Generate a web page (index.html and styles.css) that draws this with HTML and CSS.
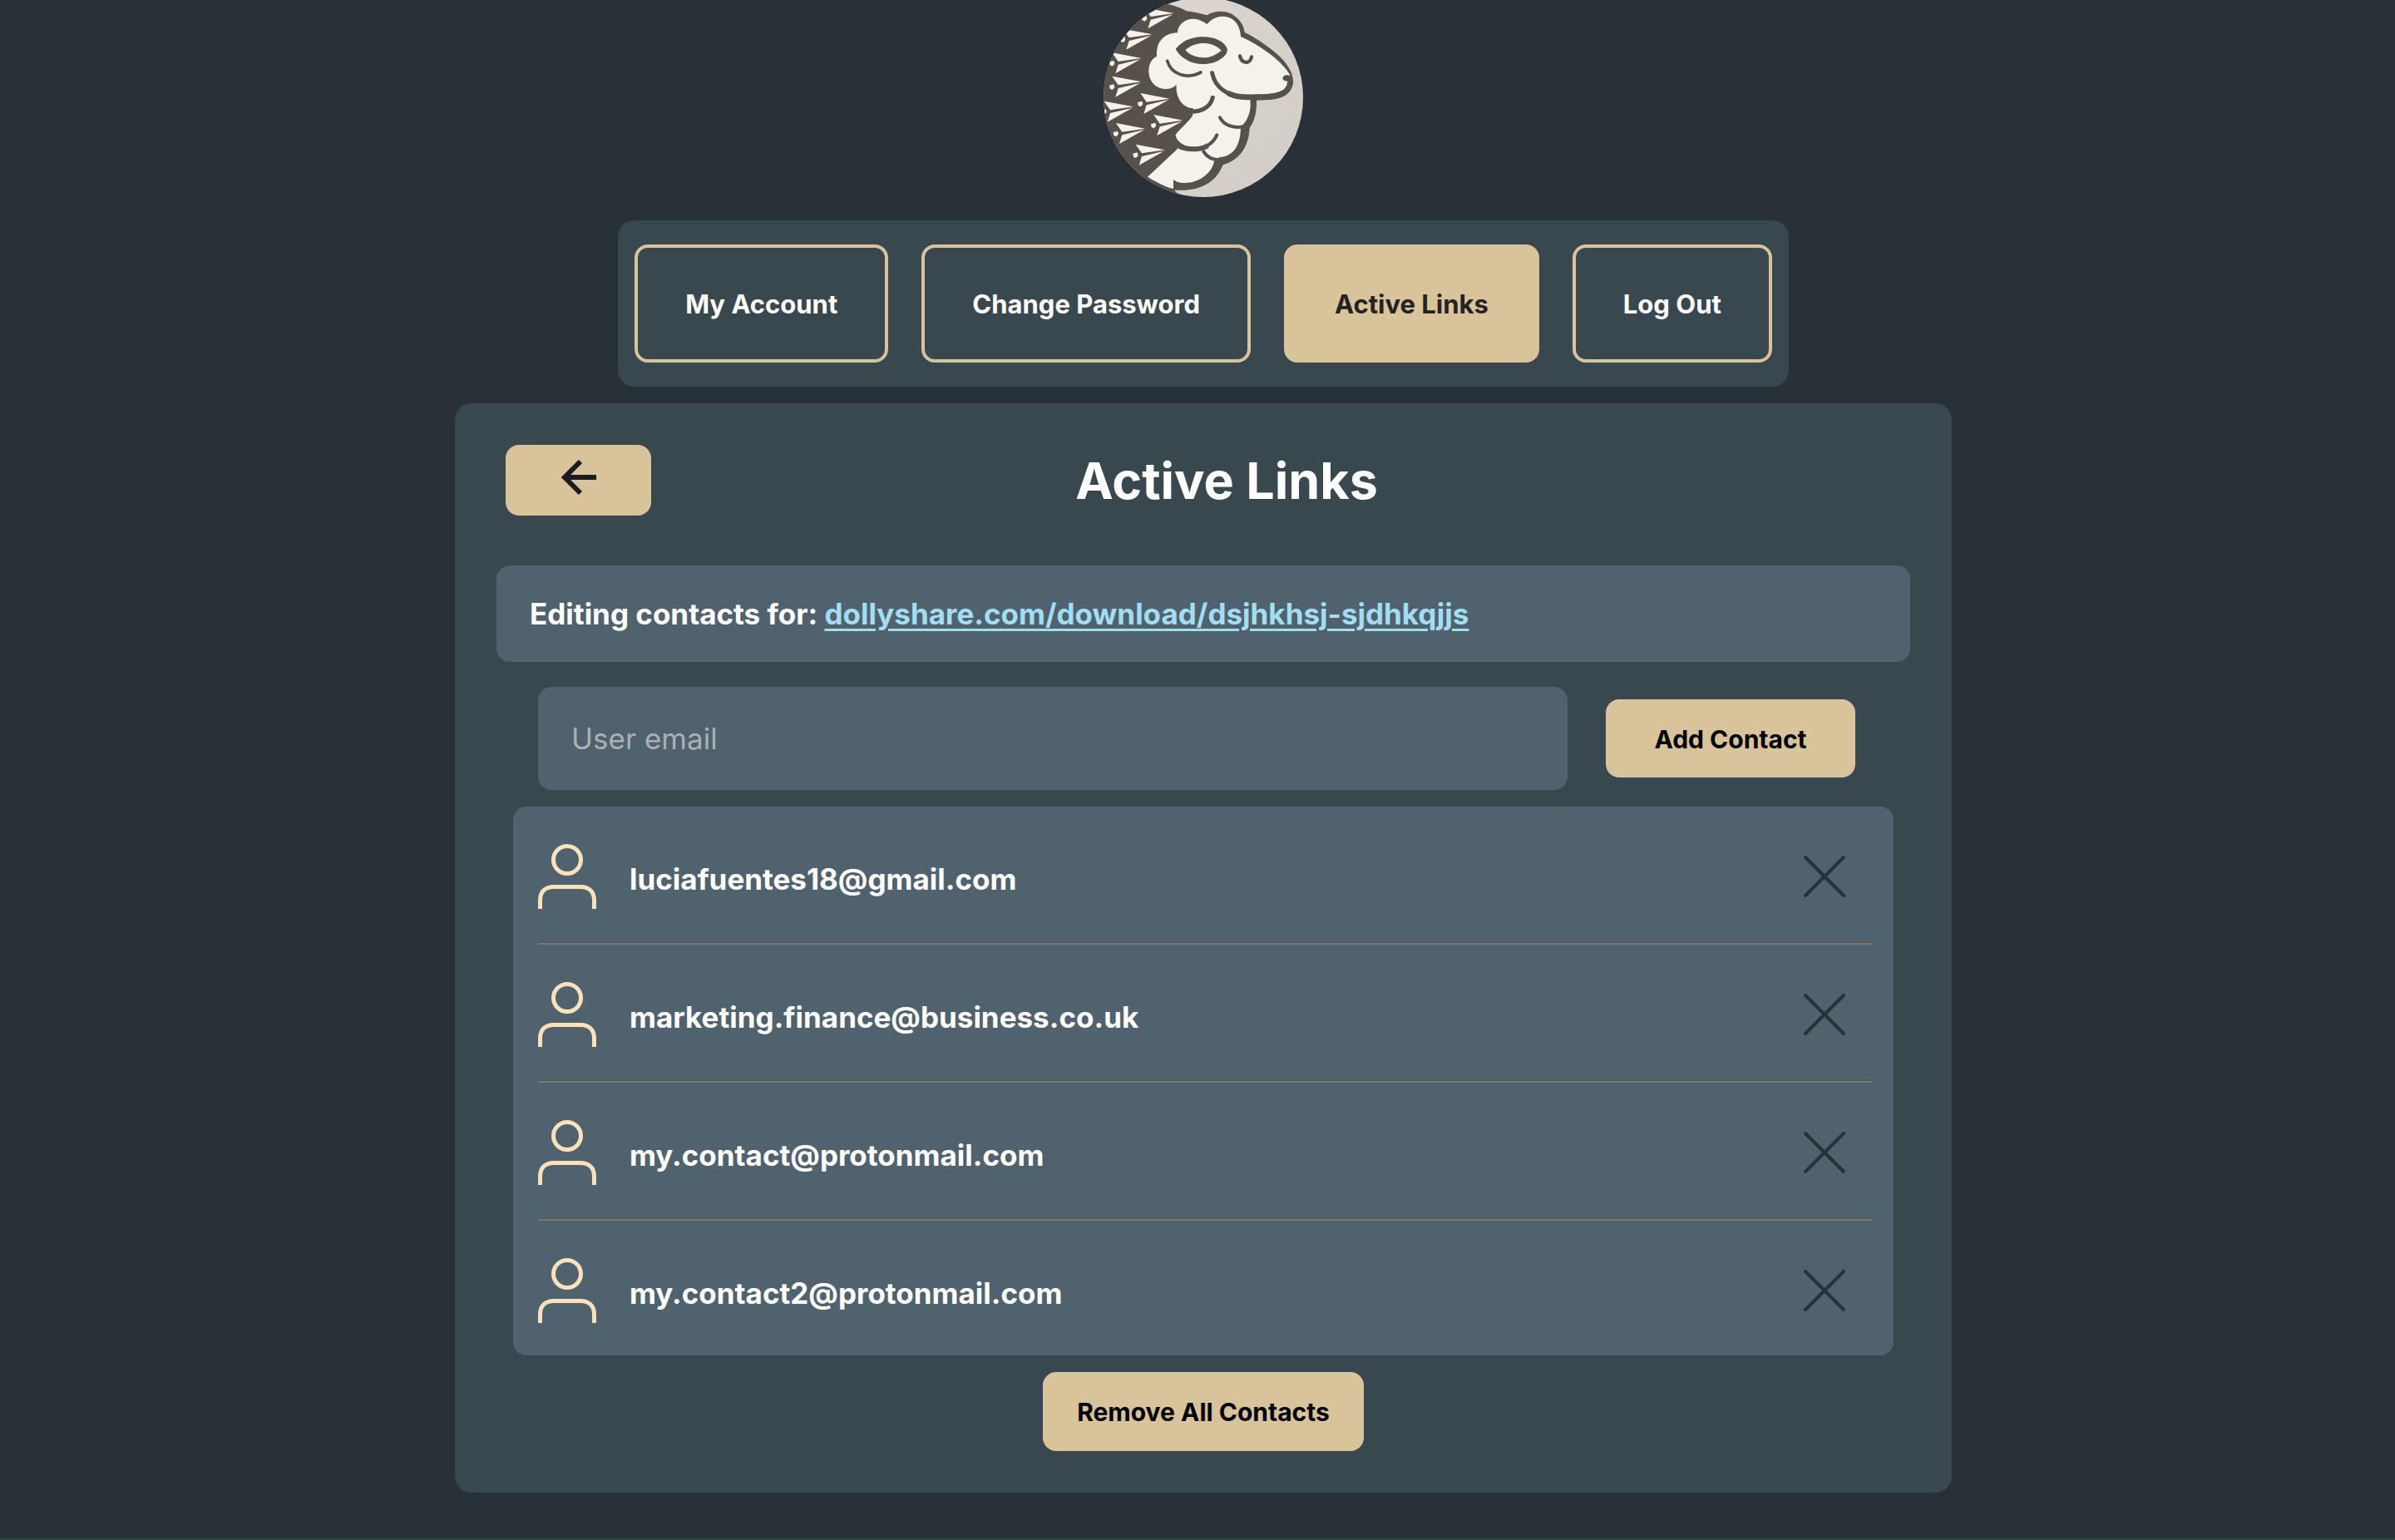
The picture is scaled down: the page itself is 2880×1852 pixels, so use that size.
FILE: index.html
```html
<!DOCTYPE html>
<html lang="en">
<head>
<meta charset="utf-8">
<meta name="viewport" content="width=device-width, initial-scale=1">
<title>Active Links</title>
<link rel="stylesheet" href="styles.css">
</head>
<body>
<svg class="sprites" aria-hidden="true">
  <symbol id="user" viewBox="0 0 70 78">
    <circle cx="35" cy="19" r="16.5"/>
    <path d="M2.5 78V68C2.5 57 9 51.5 19 51.5H51C61 51.5 67.5 57 67.5 68V78"/>
  </symbol>
  <symbol id="cross" viewBox="0 0 50 50">
    <path d="M2 2 48 48M48 2 2 48"/>
  </symbol>
</svg>

<header class="top">
  <svg class="logo" viewBox="51 -9 720 720" role="img" aria-label="Dollyshare">
    <defs>
      <clipPath id="disc"><circle cx="411" cy="351" r="360"/></clipPath>
      <linearGradient id="paper" x1="0" y1="0" x2="1" y2="1">
        <stop offset="0" stop-color="#dcd8d1"/>
        <stop offset="1" stop-color="#d1ccc4"/>
      </linearGradient>
      <g id="plane">
        <path d="M0 0-106-20-84 12ZM-4 4-84 23-94 55Z"/>
        <path d="M-116 13-100 9-97 20-105 29-114 25Z"/>
      </g>
    </defs>
    <g clip-path="url(#disc)">
      <rect x="51" y="-9" width="720" height="720" fill="url(#paper)"/>
      <path fill="#58514b" d="M0-20 230 8 262 12C300 16 330 28 350 40 378 43 400 48 424 55 450 38 492 36 520 55 545 72 558 95 560 117 600 135 665 180 698 215 722 245 735 265 735 295 733 335 700 357 650 360L603 362C604 400 598 432 578 462 575 525 545 577 482 595 462 645 420 682 345 686L305 686 340 715H0Z"/>
      <path fill="#f5f1eb" d="M424 88C442 66 465 56 492 60 525 65 545 95 546 132 610 160 690 215 722 268L722 300C715 322 690 335 640 340L580 345V362C585 400 572 435 546 458 545 520 525 562 470 567L450 583C440 630 390 662 340 660 325 660 312 656 303 648L303 680 290 678C255 665 230 650 210 638L318 537 310 488C330 460 350 450 372 418L375 391C335 390 310 350 314 305 290 335 214 325 214 255 214 230 225 212 243 203 240 155 265 120 318 118 318 90 345 65 385 69 400 72 415 80 424 88Z"/>
      <path fill="#58514b" d="M311 177C340 140 380 133 412 133 450 133 485 148 497 175 500 190 490 204 470 215 440 236 380 236 350 215 330 205 320 192 311 177Z"/>
      <path fill="#f5f1eb" d="M346 180C370 160 395 155 415 156 440 157 460 166 476 182 455 200 430 209 410 208 385 206 360 198 346 180Z"/>
      <g fill="none" stroke="#58514b" stroke-linecap="round">
        <path stroke-width="11" d="M281 220C295 268 350 288 402 261"/>
        <path stroke-width="13" d="M543 202C550 232 580 232 585 205"/>
        <path stroke-width="15" d="M443 263C452 315 500 349 560 351"/>
        <path stroke-width="20" d="M505 338C530 350 560 352 600 350 670 350 722 345 725 292"/>
        <path stroke-width="15" d="M445 352C435 390 400 405 362 402"/>
        <path stroke-width="12" d="M471 424C485 452 520 463 556 457"/>
        <path stroke-width="12" d="M306 494C325 550 430 555 460 487"/>
        <path stroke-width="18" d="M316 522C340 542 400 542 422 528"/>
        <path stroke-width="12" d="M412 547C430 578 460 580 490 576"/>
      </g>
      <ellipse cx="712" cy="282" rx="15" ry="11" fill="#58514b"/>
      <g fill="#f5f1eb">
        <use href="#plane" x="305" y="48"/>
        <use href="#plane" x="227" y="124"/>
        <use href="#plane" x="188" y="210"/>
        <use href="#plane" x="188" y="295"/>
        <use href="#plane" x="290" y="356"/>
        <use href="#plane" x="159" y="385"/>
        <use href="#plane" x="338" y="434"/>
        <use href="#plane" x="202" y="464"/>
        <use href="#plane" x="273" y="541"/>
      </g>
    </g>
  </svg>
  <nav class="tabs" aria-label="Account">
    <a class="tab" href="#account">My Account</a>
    <a class="tab" href="#password">Change Password</a>
    <a class="tab tab-current" href="#links" aria-current="page">Active Links</a>
    <a class="tab" href="#logout">Log Out</a>
  </nav>
</header>

<main class="card">
  <div class="card-head">
    <button class="btn back" type="button" aria-label="Back">
      <svg viewBox="0 0 42 42" aria-hidden="true"><path d="M42 21H5M23 2 4 21 23 40"/></svg>
    </button>
    <h1>Active Links</h1>
  </div>

  <p class="editing">Editing contacts for: <a href="#download">dollyshare.com/download/dsjhkhsj-sjdhkqjjs</a></p>

  <form class="add">
    <input type="email" placeholder="User email" aria-label="User email">
    <button class="btn btn-add" type="button">Add Contact</button>
  </form>

  <ul class="contacts">
    <li>
      <svg class="user" aria-hidden="true"><use href="#user"/></svg>
      <span>luciafuentes18@gmail.com</span>
      <button class="remove" type="button" aria-label="Remove luciafuentes18@gmail.com"><svg aria-hidden="true"><use href="#cross"/></svg></button>
    </li>
    <li>
      <svg class="user" aria-hidden="true"><use href="#user"/></svg>
      <span>marketing.finance@business.co.uk</span>
      <button class="remove" type="button" aria-label="Remove marketing.finance@business.co.uk"><svg aria-hidden="true"><use href="#cross"/></svg></button>
    </li>
    <li>
      <svg class="user" aria-hidden="true"><use href="#user"/></svg>
      <span>my.contact@protonmail.com</span>
      <button class="remove" type="button" aria-label="Remove my.contact@protonmail.com"><svg aria-hidden="true"><use href="#cross"/></svg></button>
    </li>
    <li>
      <svg class="user" aria-hidden="true"><use href="#user"/></svg>
      <span>my.contact2@protonmail.com</span>
      <button class="remove" type="button" aria-label="Remove my.contact2@protonmail.com"><svg aria-hidden="true"><use href="#cross"/></svg></button>
    </li>
  </ul>

  <button class="btn btn-all" type="button">Remove All Contacts</button>
</main>
<footer class="foot"></footer>
</body>
</html>
```
FILE: styles.css
```css
:root {
  --page: #293138;
  --card: #39474f;
  --panel: #50626d;
  --gold: #d8c39a;
  --cream: #f9e2bb;
}

* {
  box-sizing: border-box;
}

body {
  margin: 0;
  padding-left: 14px;
  background: var(--page);
  color: #fff;
  font-family: Inter, "Liberation Sans", sans-serif;
  font-size: 35px;
  font-weight: 700;
  line-height: 44px;
}

button,
input {
  font: inherit;
}

.sprites {
  display: none;
}

.top {
  display: flex;
  flex-direction: column;
  align-items: center;
}

.logo {
  width: 240px;
  height: 240px;
  margin-top: -3px;
}

.tabs {
  display: flex;
  gap: 40px;
  margin: 28px 0 20px;
  padding: 29px 20px;
  border-radius: 20px;
  background: var(--card);
}

.tab {
  padding: 48px 57px 46px;
  border: 4px solid var(--gold);
  border-radius: 16px;
  color: #fff;
  font-size: 31px;
  line-height: 40px;
  text-decoration: none;
}

.tab-current {
  background: var(--gold);
  color: #232323;
}

.card {
  display: flex;
  flex-direction: column;
  max-width: 1800px;
  margin: 0 auto;
  padding: 50px;
  border-radius: 20px;
  background: var(--card);
}

.card-head {
  display: flex;
  align-items: center;
  margin-bottom: 60px;
  padding: 0 130px 0 11px;
}

.card-head h1 {
  flex: 1;
  margin: 0;
  font-size: 61px;
  line-height: 80px;
  text-align: center;
}

.btn {
  border: 0;
  border-radius: 16px;
  background: var(--gold);
  color: #000;
  font-size: 30px;
  line-height: 38px;
}

.back {
  display: flex;
  justify-content: center;
  width: 175px;
  height: 85px;
  padding: 18px 0;
}

.back svg {
  width: 42px;
  height: 42px;
  fill: none;
  stroke: #1c1b1f;
  stroke-width: 6;
}

.editing {
  margin: 0 0 30px;
  padding: 36px 40px;
  border-radius: 16px;
  background: var(--panel);
}

.editing a {
  color: #a2def2;
  text-decoration-thickness: 3px;
  text-underline-offset: 5px;
}

.add {
  display: flex;
  align-items: center;
  gap: 46px;
  margin-bottom: 20px;
  padding: 0 66px 0 50px;
}

.add input {
  flex: 1;
  min-width: 0;
  height: 124px;
  padding: 0 40px;
  border: 0;
  border-radius: 16px;
  background: var(--panel);
  color: #fff;
  font-weight: 400;
}

.add input::placeholder {
  color: #a9b0b6;
  opacity: 1;
}

.btn-add {
  width: 300px;
  padding: 29px 0 27px;
}

.contacts {
  margin: 0 20px 20px;
  padding: 0 26px 0 30px;
  border-radius: 16px;
  background: var(--panel);
  list-style: none;
}

.contacts li {
  display: flex;
  align-items: center;
  box-sizing: content-box;
  height: 156px;
  padding: 6px 32px 0 0;
}

.contacts li + li {
  padding-top: 8px;
  border-top: 2px solid #58595b;
  box-shadow: inset 0 2px #777879;
}

.contacts span {
  padding-top: 6px;
}

.user {
  width: 70px;
  height: 78px;
  margin-right: 40px;
  fill: none;
  stroke: var(--cream);
  stroke-width: 5;
}

.remove {
  display: flex;
  margin-left: auto;
  padding: 0;
  border: 0;
  background: none;
}

.remove svg {
  width: 50px;
  height: 50px;
  stroke: #293138;
  stroke-width: 4;
  stroke-linecap: round;
}

.btn-all {
  align-self: center;
  padding: 29px 41px 28px;
}

.foot {
  margin: 55px 0 0 -14px;
  border-top: 2px solid #28502c;
}
```
